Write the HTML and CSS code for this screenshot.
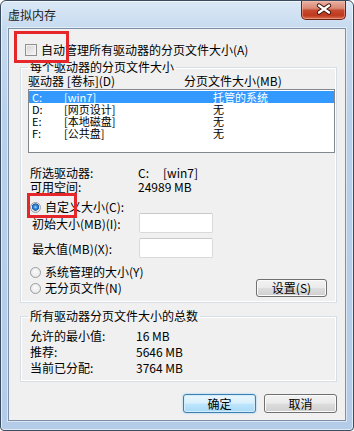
FILE: index.html
```html
<!DOCTYPE html>
<html lang="zh-CN">
<head>
    <meta charset="UTF-8">
    <meta name="viewport" content="width=device-width, initial-scale=1.0">
    <title>虚拟内存</title>
    <link rel="stylesheet" href="styles.css">
</head>
<body>
    <div class="window">
        <div class="titlebar">
            <span class="title">虚拟内存</span>
            <div class="close-btn">
                <svg width="43" height="17" viewBox="0 0 43 17">
                    <path d="M17 4.5 L27 11.5 M27 4.5 L17 11.5" stroke="#3d1008" stroke-width="4.4" stroke-linecap="round" fill="none"/>
                    <path d="M17 4.5 L27 11.5 M27 4.5 L17 11.5" stroke="#fff" stroke-width="2.4" stroke-linecap="round" fill="none"/>
                </svg>
            </div>
        </div>

        <div class="client">
            <div class="check-row"><span class="checkbox"></span>自动管理所有驱动器的分页文件大小(A)</div>

            <fieldset class="group">
                <legend>每个驱动器的分页文件大小</legend>
                <div class="list-head">
                    <span>驱动器 [卷标](D)</span>
                    <span>分页文件大小(MB)</span>
                </div>
                <div class="listbox">
                    <div class="list-row selected"><span>C:</span><span>[win7]</span><span>托管的系统</span></div>
                    <div class="list-row"><span>D:</span><span>[网页设计]</span><span>无</span></div>
                    <div class="list-row"><span>E:</span><span>[本地磁盘]</span><span>无</span></div>
                    <div class="list-row"><span>F:</span><span>[公共盘]</span><span>无</span></div>
                </div>

                <div class="info">
                    <span>所选驱动器:</span>
                    <span><span class="drv">C:</span>[win7]</span>
                    <span>可用空间:</span>
                    <span>24989 MB</span>
                </div>

                <div class="radio-row custom"><span class="radio checked"></span>自定义大小(C):</div>
                <div class="size-row"><label>初始大小(MB)(I):</label><span class="textbox"></span></div>
                <div class="size-row second"><label>最大值(MB)(X):</label><span class="textbox"></span></div>
                <div class="radio-row system"><span class="radio"></span>系统管理的大小(Y)</div>
                <div class="radio-last">
                    <div class="radio-row"><span class="radio"></span>无分页文件(N)</div>
                    <button class="btn set-btn">设置(S)</button>
                </div>
            </fieldset>

            <fieldset class="group totals">
                <legend>所有驱动器分页文件大小的总数</legend>
                <div class="totals-grid">
                    <span>允许的最小值:</span><span>16 MB</span>
                    <span>推荐:</span><span>5646 MB</span>
                    <span>当前已分配:</span><span>3764 MB</span>
                </div>
            </fieldset>

            <div class="actions">
                <button class="btn default">确定</button>
                <button class="btn">取消</button>
            </div>
        </div>

        <div class="mark mark-auto"></div>
        <div class="mark mark-custom"></div>
    </div>
</body>
</html>
```

FILE: styles.css
```css
* {
    box-sizing: border-box;
}

body {
    margin: 0;
    font-family: "Noto Sans CJK SC", sans-serif;
    font-size: 12px;
    color: #000;
    background: #fff;
}

.window {
    position: relative;
    width: 354px;
    height: 431px;
    padding: 0 7px 8px;
    border: 1px solid #3a4c62;
    border-radius: 6px 6px 4px 4px;
    background: linear-gradient(180deg, #dbe8f6 0, #c6daef 28px, #b9d0ea 120px, #b4cce8 100%);
    box-shadow: inset 0 0 0 1px rgba(255, 255, 255, 0.6);
}

.titlebar {
    height: 27px;
    display: flex;
    justify-content: space-between;
    align-items: flex-start;
}

.title {
    padding-top: 7px;
    line-height: 14px;
    color: #1b1b1b;
}

.close-btn {
    width: 45px;
    height: 19px;
    border: 1px solid #6a2214;
    border-top: none;
    border-radius: 0 0 5px 5px;
    background: linear-gradient(180deg, #eab0a2 0, #d98a76 40%, #c64a2f 52%, #bf3a1f 80%, #d9704f 100%);
    box-shadow: inset 0 0 0 1px rgba(255, 200, 180, 0.45);
}

.close-btn svg {
    display: block;
}

.client {
    height: 393px;
    padding: 14px 8px 0 11px;
    border: 1px solid #7d90a7;
    background: #f0f0f0;
    box-shadow: 0 0 0 1px rgba(255, 255, 255, 0.5);
}

.check-row {
    display: flex;
    align-items: center;
    line-height: 14px;
}

.checkbox {
    width: 12px;
    height: 12px;
    margin: 0 4px 0 5px;
    border: 1px solid #8e8f8f;
    background: linear-gradient(135deg, #d4d4d4, #f7f7f7);
    box-shadow: inset 0 0 0 1px #f2f2f2;
}

.group {
    margin: 3px 0 0;
    min-width: 0;
    padding: 0 1px 5px 7px;
    border: 1px solid #d5dfe5;
    box-shadow: inset 0 0 0 1px #fff;
}

.group legend {
    padding: 0 2px;
    line-height: 14px;
}

.list-head {
    display: grid;
    grid-template-columns: 156px auto;
    line-height: 14px;
}

.listbox {
    height: 64px;
    margin-top: 1px;
    padding-top: 1px;
    border: 1px solid #828790;
    background: #fff;
}

.list-row {
    display: grid;
    grid-template-columns: 32px 149px auto;
    height: 12px;
    padding-left: 3px;
    font-size: 11px;
    line-height: 12px;
}

.list-row.selected {
    background: #3399ff;
    color: #fff;
}

.info {
    display: grid;
    grid-template-columns: 108px auto;
    margin-top: 13px;
    padding-left: 2px;
    line-height: 14px;
}

.drv {
    display: inline-block;
    width: 25px;
}

.radio-row {
    display: flex;
    align-items: center;
    padding-left: 2px;
    line-height: 14px;
}

.radio-row.custom {
    margin-top: 7px;
    line-height: 12px;
}

.radio-row.system {
    margin-top: 7px;
}

.radio {
    width: 11px;
    height: 11px;
    margin-right: 4px;
    border: 1px solid #9d9d9d;
    border-radius: 50%;
    background: radial-gradient(circle at 50% 40%, #fbfbfb 0, #e2e2e2 100%);
}

.radio.checked {
    background: radial-gradient(circle at 50% 45%, #a6d8fa 0, #3c8ddb 1.6px, #1c5ea9 3.4px, #e9e9e9 3.9px, #dcdcdc 100%);
}

.size-row {
    display: flex;
    align-items: center;
    height: 20px;
    padding-left: 4px;
}

.size-row.second {
    margin-top: 5px;
}

.size-row label {
    width: 107px;
}

.textbox {
    width: 74px;
    height: 20px;
    border: 1px solid #d9d9d9;
    border-top-color: #c8c8c8;
    border-radius: 2px;
    background: #fff;
}

.radio-last {
    display: flex;
    justify-content: space-between;
    align-items: center;
    height: 18px;
}

.btn {
    width: 73px;
    height: 19px;
    padding: 0;
    border: 1px solid #707070;
    border-radius: 3px;
    font: inherit;
    line-height: 16px;
    color: #000;
    background: linear-gradient(180deg, #f2f2f2 0, #ebebeb 48%, #dddddd 52%, #cfcfcf 100%);
    box-shadow: inset 0 0 0 1px #fbfbfb;
}

.set-btn {
    width: 71px;
    height: 18px;
    margin-right: 8px;
}

.btn.default {
    border-color: #3c7fb1;
    background: linear-gradient(180deg, #eaf6fd 0, #d9f0fc 48%, #bee6fd 52%, #a7d9f5 100%);
    box-shadow: inset 0 0 0 1px #d2ecfb, 0 0 2px #7ec3ee;
}

.totals {
    margin-top: 6px;
    padding-top: 5px;
}

.totals-grid {
    display: grid;
    grid-template-columns: 106px auto;
    padding-left: 2px;
    line-height: 16px;
}

.actions {
    display: flex;
    justify-content: flex-end;
    gap: 8px;
    margin-top: 12px;
}

/* red highlight boxes drawn over the dialog */
.mark {
    position: absolute;
    border: 3px solid #e5262b;
}

.mark-auto {
    left: 13px;
    top: 30px;
    width: 55px;
    height: 32px;
}

.mark-custom {
    left: 26px;
    top: 192px;
    width: 50px;
    height: 25px;
}
```
